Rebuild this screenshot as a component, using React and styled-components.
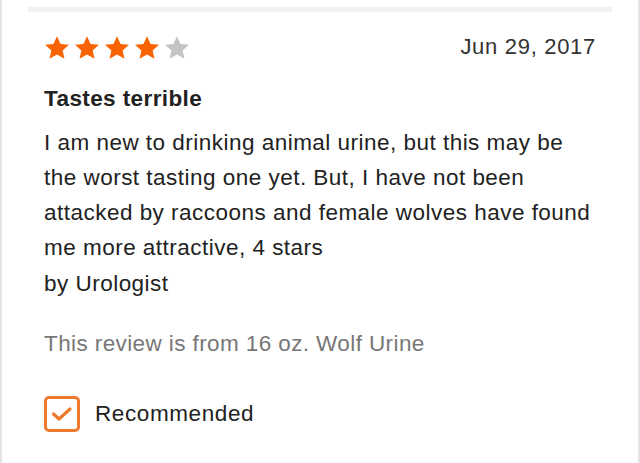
import React from 'react'
import styled, { createGlobalStyle } from 'styled-components'

const Global = createGlobalStyle`
  html, body { margin: 0; padding: 0; background: #fff; }
  body { font-family: "Liberation Sans", Arial, sans-serif; color: #222; }
`

const Frame = styled.div`
  width: 640px;
  height: 463px;
  box-sizing: border-box;
  border-left: 2px solid #e4e4e4;
  border-right: 2px solid #e4e4e4;
  padding: 7px 26px 0 26px;
  overflow: hidden;
`

const Divider = styled.div`
  height: 5px;
  background: #f2f2f2;
`

const Review = styled.div`
  padding: 0 16px 0 16px;
`

const Header = styled.div`
  display: flex;
  justify-content: space-between;
  align-items: center;
  margin-top: 22px;
  height: 28px;
`

const Stars = styled.div`
  display: flex;
  gap: 4px;
`

const DateText = styled.span`
  font-size: 22px;
  letter-spacing: 0.7px;
  color: #333;
  margin-top: -2px;
`

const Title = styled.h3`
  margin: 23px 0 0 0;
  font-size: 22.5px;
  letter-spacing: 0.4px;
  font-weight: bold;
  color: #222;
  line-height: 28px;
`

const Text = styled.p`
  margin: ${p => p.$gap}px -6px 0 0;
  font-size: 22.5px;
  letter-spacing: ${p => p.$spacing || 0.48}px;
  line-height: ${p => p.$line || 30}px;
  color: ${p => p.$muted ? '#777' : '#222'};
`

const Check = styled.div`
  display: flex;
  align-items: center;
  gap: 15px;
  margin-top: 37px;
  font-size: 22.5px;
  letter-spacing: 0.6px;
  color: #222;
`

const Box = styled.div`
  width: 30px;
  height: 30px;
  border: 3px solid #ef7a2e;
  border-radius: 5px;
  display: flex;
  align-items: center;
  justify-content: center;
`

function Star({ filled }) {
  return (
    <svg width="26" height="26" viewBox="0 0 24 24">
      <path
        d="M12 1.2l3.3 7.1 7.7.8-5.8 5.2 1.7 7.6L12 18l-6.9 3.9 1.7-7.6L1 9.1l7.7-.8z"
        fill={filled ? '#f96302' : '#c4c4c4'}
      />
    </svg>
  )
}

export default function App() {
  return (
    <Frame>
      <Global />
      <Divider />
      <Review>
        <Header>
          <Stars>
            {[1, 2, 3, 4, 5].map(n => <Star key={n} filled={n <= 4} />)}
          </Stars>
          <DateText>Jun 29, 2017</DateText>
        </Header>
        <Title>Tastes terrible</Title>
        <Text $gap={12} $line={35}>
          I am new to drinking animal urine, but this may be the worst tasting one yet. But, I have not been attacked by raccoons and female wolves have found me more attractive, 4 stars
        </Text>
        <Text $gap={4}>by Urologist</Text>
        <Text $gap={30} $muted $spacing={0.4}>This review is from 16 oz. Wolf Urine</Text>
        <Check>
          <Box>
            <svg width="22" height="16" viewBox="0 0 22 16">
              <path d="M2.5 8l5.5 5L19 3" fill="none" stroke="#ef7a2e" strokeWidth="3.2" strokeLinecap="round" strokeLinejoin="round" />
            </svg>
          </Box>
          Recommended
        </Check>
      </Review>
    </Frame>
  )
}
